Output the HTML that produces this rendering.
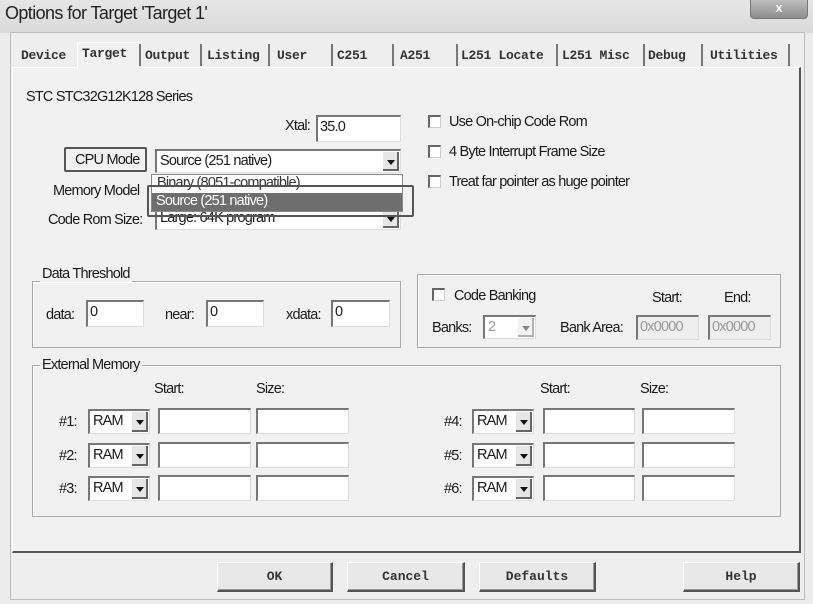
<!DOCTYPE html>
<html><head><style>
*{margin:0;padding:0;box-sizing:border-box}
body{width:813px;height:604px;overflow:hidden;background:#ececec;font-family:"Liberation Sans",sans-serif;position:relative;color:#1a1a1a}
.a{position:absolute;white-space:nowrap}
.t{font-size:14.5px;letter-spacing:-0.8px;line-height:16px}
.tab{position:absolute;top:48px;font-family:"Liberation Mono",monospace;font-size:13px;font-weight:bold;color:#333;letter-spacing:-0.3px}
.sep{position:absolute;top:44px;width:2px;height:22px;background:#777}
.in{position:absolute;background:#fff;border-top:2px solid #777;border-left:2px solid #777;border-right:1px solid #ddd;border-bottom:1px solid #ddd;font-size:14.5px;letter-spacing:-0.8px;padding-left:2px;line-height:20px}
.sel{position:absolute;background:#fff;border-top:2px solid #777;border-left:2px solid #777;border-right:1px solid #ddd;border-bottom:1px solid #ddd;font-size:14.5px;letter-spacing:-0.8px;padding-left:3px;line-height:20px}
.arr{position:absolute;right:1px;top:1px;bottom:1px;width:16px;background:#e6e6e6;border-right:2px solid #666;border-bottom:2px solid #666}
.arr:after{content:"";position:absolute;left:4px;top:8px;border-left:4px solid transparent;border-right:4px solid transparent;border-top:5px solid #111}
.cb{position:absolute;width:13px;height:13px;background:#fff;border-top:2px solid #666;border-left:2px solid #666;border-right:1px solid #ccc;border-bottom:1px solid #ccc}
.grp{position:absolute;border:1px solid #aaa;box-shadow:1px 1px 0 #fff inset}
.gl{position:absolute;background:#f1f1f1;padding:0 2px;font-size:14.5px;letter-spacing:-0.8px}
.btn{position:absolute;top:562px;height:30px;background:#e8e8e8;border:1px solid #fff;border-right:2px solid #555;border-bottom:2px solid #555;box-shadow:inset -1px -1px 0 #999;font-family:"Liberation Mono",monospace;font-weight:bold;font-size:13px;text-align:center;line-height:27px;color:#333}
</style></head><body>
<div class="a" style="left:0;top:0;width:813px;height:33px;background:linear-gradient(#e6e6e6,#dadada)"></div>
<div class="a" style="left:5px;top:3px;font-size:18px;letter-spacing:-0.6px;color:#222">Options for Target 'Target 1'</div>
<div class="a" style="left:750px;top:0;width:58px;height:19px;background:linear-gradient(#bdbdbd,#8d8d8d);border:1px solid #777;border-top:none;border-radius:0 0 4px 4px;color:#fff;font-size:13px;text-align:center;line-height:16px;font-weight:bold">x</div>
<div class="a" style="left:10px;top:32px;width:795px;height:568px;background:#eeeeee;border:1px solid #bbb"></div>
<div class="a" style="left:12px;top:67px;width:789px;height:486px;background:#f1f1f1;border-top:1px solid #fff;border-left:1px solid #fff;border-right:2px solid #555;border-bottom:2px solid #555"></div>
<div class="a" style="left:77px;top:42px;width:62px;height:27px;background:#f1f1f1;border-top:1px solid #fff;border-left:1px solid #fff"></div>
<div class="tab" style="left:21px">Device</div>
<div class="tab" style="left:82px;top:46px">Target</div>
<div class="tab" style="left:145px">Output</div>
<div class="tab" style="left:207px">Listing</div>
<div class="tab" style="left:277px">User</div>
<div class="tab" style="left:337px">C251</div>
<div class="tab" style="left:400px">A251</div>
<div class="tab" style="left:461px">L251 Locate</div>
<div class="tab" style="left:562px">L251 Misc</div>
<div class="tab" style="left:648px">Debug</div>
<div class="tab" style="left:710px">Utilities</div>
<div class="sep" style="left:139px"></div><div class="sep" style="left:200px"></div><div class="sep" style="left:268px"></div><div class="sep" style="left:331px"></div><div class="sep" style="left:392px"></div><div class="sep" style="left:456px"></div><div class="sep" style="left:556px"></div><div class="sep" style="left:643px"></div><div class="sep" style="left:701px"></div><div class="sep" style="left:788px"></div>

<div class="a t" style="left:26px;top:89px">STC STC32G12K128 Series</div>
<div class="a t" style="left:285px;top:118px">Xtal:</div>
<div class="in" style="left:316px;top:115px;width:85px;height:27px">35.0</div>
<div class="cb" style="left:428px;top:115px"></div><div class="a t" style="left:449px;top:114px">Use On-chip Code Rom</div>
<div class="cb" style="left:428px;top:145px"></div><div class="a t" style="left:449px;top:144px">4 Byte Interrupt Frame Size</div>
<div class="cb" style="left:428px;top:175px"></div><div class="a t" style="left:449px;top:174px">Treat far pointer as huge pointer</div>

<div class="a" style="left:64px;top:147px;width:83px;height:25px;border:2px solid #555;border-radius:2px"></div>
<div class="a t" style="left:75px;top:152px">CPU Mode</div>
<div class="sel" style="left:155px;top:149px;width:246px;height:24px">Source (251 native)<div class="arr"></div></div>
<div class="a t" style="left:53px;top:183px">Memory Model</div>
<div class="a t" style="left:48px;top:212px">Code Rom Size:</div>
<div class="sel" style="left:155px;top:206px;width:246px;height:24px">Large: 64K program<div class="arr"></div></div>
<div class="a" style="left:151px;top:174px;width:252px;height:38px;background:#fff;border:1px solid #888"></div>
<div class="a t" style="left:157px;top:175px;color:#333">Binary (8051-compatible)</div>
<div class="a t" style="left:152px;top:193px;width:250px;height:18px;background:#6e6e6e;color:#fff;padding-left:4px;line-height:17px">Source (251 native)</div>
<div class="a" style="left:147px;top:185px;width:267px;height:32px;border:2px solid #555;border-radius:2px"></div>

<div class="grp" style="left:32px;top:281px;width:369px;height:67px"></div>
<div class="gl" style="left:40px;top:266px">Data Threshold</div>
<div class="a t" style="left:46px;top:307px">data:</div><div class="in" style="left:86px;top:300px;width:58px;height:27px">0</div>
<div class="a t" style="left:165px;top:307px">near:</div><div class="in" style="left:206px;top:300px;width:58px;height:27px">0</div>
<div class="a t" style="left:286px;top:307px">xdata:</div><div class="in" style="left:331px;top:300px;width:59px;height:27px">0</div>

<div class="grp" style="left:417px;top:274px;width:364px;height:74px"></div>
<div class="cb" style="left:432px;top:288px"></div><div class="a t" style="left:454px;top:288px">Code Banking</div>
<div class="a t" style="left:652px;top:290px">Start:</div><div class="a t" style="left:724px;top:290px">End:</div>
<div class="a t" style="left:432px;top:320px">Banks:</div>
<div class="sel" style="left:483px;top:315px;width:53px;height:24px;color:#999">2<div class="arr" style="opacity:.5"></div></div>
<div class="a t" style="left:560px;top:320px">Bank Area:</div>
<div class="in" style="left:636px;top:315px;width:63px;height:25px;background:#eee;color:#999">0x0000</div>
<div class="in" style="left:708px;top:315px;width:63px;height:25px;background:#eee;color:#999">0x0000</div>

<div class="grp" style="left:32px;top:365px;width:749px;height:152px"></div>
<div class="gl" style="left:40px;top:357px">External Memory</div>
<div class="a t" style="left:154px;top:381px">Start:</div><div class="a t" style="left:256px;top:381px">Size:</div>
<div class="a t" style="left:540px;top:381px">Start:</div><div class="a t" style="left:640px;top:381px">Size:</div>

<div class="a t" style="left:59px;top:414px">#1:</div><div class="sel" style="left:88px;top:409px;width:62px;height:25px">RAM<div class="arr"></div></div><div class="in" style="left:158px;top:408px;width:93px;height:26px"></div><div class="in" style="left:256px;top:408px;width:93px;height:26px"></div>
<div class="a t" style="left:59px;top:448px">#2:</div><div class="sel" style="left:88px;top:443px;width:62px;height:25px">RAM<div class="arr"></div></div><div class="in" style="left:158px;top:442px;width:93px;height:26px"></div><div class="in" style="left:256px;top:442px;width:93px;height:26px"></div>
<div class="a t" style="left:59px;top:481px">#3:</div><div class="sel" style="left:88px;top:476px;width:62px;height:25px">RAM<div class="arr"></div></div><div class="in" style="left:158px;top:475px;width:93px;height:26px"></div><div class="in" style="left:256px;top:475px;width:93px;height:26px"></div>
<div class="a t" style="left:444px;top:414px">#4:</div><div class="sel" style="left:472px;top:409px;width:62px;height:25px">RAM<div class="arr"></div></div><div class="in" style="left:543px;top:408px;width:92px;height:26px"></div><div class="in" style="left:642px;top:408px;width:93px;height:26px"></div>
<div class="a t" style="left:444px;top:448px">#5:</div><div class="sel" style="left:472px;top:443px;width:62px;height:25px">RAM<div class="arr"></div></div><div class="in" style="left:543px;top:442px;width:92px;height:26px"></div><div class="in" style="left:642px;top:442px;width:93px;height:26px"></div>
<div class="a t" style="left:444px;top:481px">#6:</div><div class="sel" style="left:472px;top:476px;width:62px;height:25px">RAM<div class="arr"></div></div><div class="in" style="left:543px;top:475px;width:92px;height:26px"></div><div class="in" style="left:642px;top:475px;width:93px;height:26px"></div>

<div class="btn" style="left:217px;width:116px">OK</div>
<div class="btn" style="left:347px;width:118px">Cancel</div>
<div class="btn" style="left:479px;width:117px">Defaults</div>
<div class="btn" style="left:683px;width:117px">Help</div>
</body></html>
